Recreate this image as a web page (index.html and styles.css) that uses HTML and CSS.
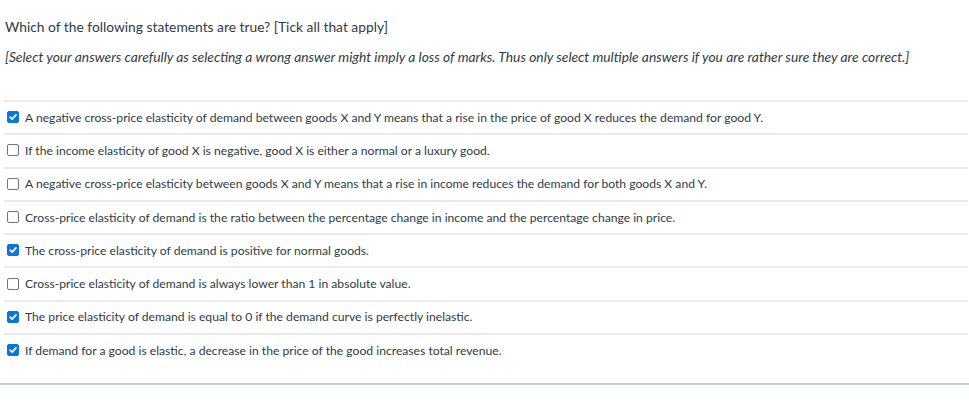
FILE: index.html
```html
<!DOCTYPE html>
<html>
<head>
<meta charset="utf-8">
<link rel="stylesheet" href="styles.css">
</head>
<body>
<div class="quiz">
  <div class="prompt">
    <p class="q">Which of the following statements are true? [Tick all that apply]</p>
    <p class="note">[Select your answers carefully as selecting a wrong answer might imply a loss of marks. Thus only select multiple answers if you are rather sure they are correct.]</p>
  </div>
  <div class="answers">
    <label class="answer"><span class="box checked"><svg viewBox="0 0 12 12"><path d="M2.6 6.2 L5 8.6 L9.6 3.4" /></svg></span><span class="txt">A negative cross-price elasticity of demand between goods X and Y means that a rise in the price of good X reduces the demand for good Y.</span></label>
    <label class="answer"><span class="box"></span><span class="txt">If the income elasticity of good X is negative, good X is either a normal or a luxury good.</span></label>
    <label class="answer"><span class="box"></span><span class="txt">A negative cross-price elasticity between goods X and Y means that a rise in income reduces the demand for both goods X and Y.</span></label>
    <label class="answer"><span class="box"></span><span class="txt">Cross-price elasticity of demand is the ratio between the percentage change in income and the percentage change in price.</span></label>
    <label class="answer"><span class="box checked"><svg viewBox="0 0 12 12"><path d="M2.6 6.2 L5 8.6 L9.6 3.4" /></svg></span><span class="txt">The cross-price elasticity of demand is positive for normal goods.</span></label>
    <label class="answer"><span class="box"></span><span class="txt">Cross-price elasticity of demand is always lower than 1 in absolute value.</span></label>
    <label class="answer"><span class="box checked"><svg viewBox="0 0 12 12"><path d="M2.6 6.2 L5 8.6 L9.6 3.4" /></svg></span><span class="txt">The price elasticity of demand is equal to 0 if the demand curve is perfectly inelastic.</span></label>
    <label class="answer"><span class="box checked"><svg viewBox="0 0 12 12"><path d="M2.6 6.2 L5 8.6 L9.6 3.4" /></svg></span><span class="txt">If demand for a good is elastic, a decrease in the price of the good increases total revenue.</span></label>
  </div>
  <div class="footer-line"></div>
</div>
</body>
</html>
```

FILE: styles.css
```css
* { box-sizing: border-box; }
html, body { margin: 0; padding: 0; background: #fff; }
body {
  font-family: Lato, "Open Sans", sans-serif;
  color: #2d3b45;
}
.prompt {
  padding: 18px 5px 0 5px;
}
.q {
  margin: 0;
  font-size: 13.8px;
  line-height: 18px;
}
.note {
  margin: 12px 0 0 0;
  font-size: 13.8px;
  line-height: 18px;
  font-style: italic;
}
.answers {
  margin: 34px 1px 0 4px;
  padding-bottom: 16.6px;
}
.answer {
  display: flex;
  align-items: center;
  gap: 6px;
  height: 33.3px;
  border-top: 2px solid #e9ebed;
  padding-left: 3px;
  padding-bottom: 1px;
  font-size: 12.15px;
}
.box {
  flex: none;
  width: 12px;
  height: 12px;
  border: 1px solid #6b7780;
  border-radius: 2px;
  background: #fff;
  display: flex;
}
.box.checked {
  background: #0b74de;
  border-color: #0b74de;
}
.box svg {
  width: 10px;
  height: 10px;
}
.box svg path {
  fill: none;
  stroke: #fff;
  stroke-width: 2;
  stroke-linecap: round;
  stroke-linejoin: round;
}
.footer-line {
  height: 2px;
  background: #c7cdd1;
}
```
